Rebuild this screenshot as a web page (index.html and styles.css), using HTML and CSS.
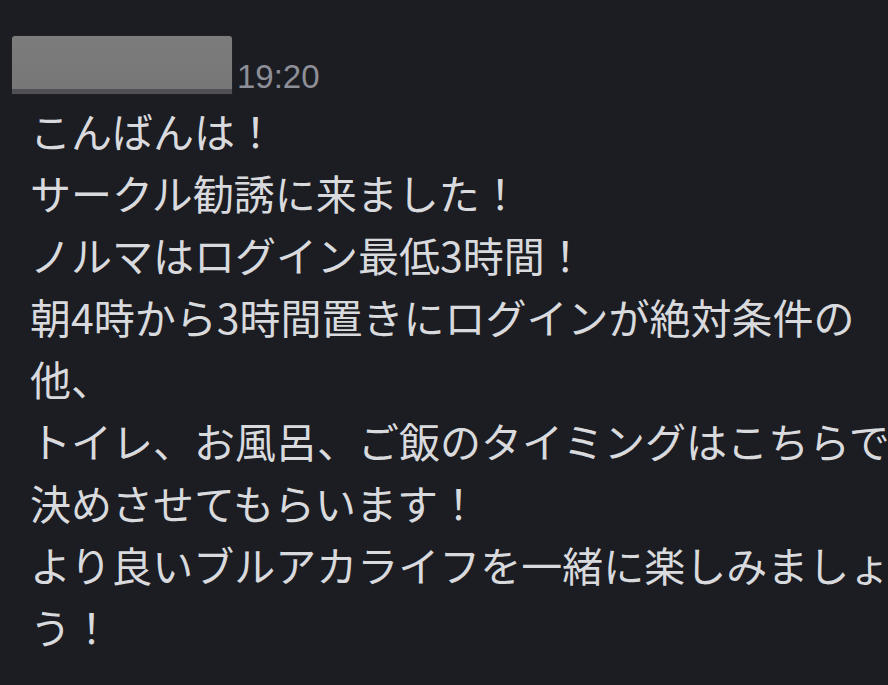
FILE: index.html
```html
<!DOCTYPE html>
<html lang="ja">
<head>
<meta charset="utf-8">
<link rel="stylesheet" href="styles.css">
</head>
<body>
<div class="message">
  <div class="header">
    <div class="name-blur"></div>
    <span class="time">19:20</span>
  </div>
  <p class="content">こんばんは！<br>サークル勧誘に来ました！<br>ノルマはログイン最低3時間！<br>朝4時から3時間置きにログインが絶対条件の<br>他、<br>トイレ、お風呂、ご飯のタイミングはこちらで<br>決めさせてもらいます！<br>より良いブルアカライフを一緒に楽しみましょ<br>う！</p>
</div>
</body>
</html>
```
FILE: styles.css
```css
html, body {
  margin: 0;
  padding: 0;
  background: #1c1d22;
  overflow: hidden;
}
body {
  width: 888px;
  height: 685px;
}
.message {
  padding: 36px 0 0 12px;
}
.header {
  display: flex;
  align-items: flex-end;
  height: 58px;
}
.name-blur {
  width: 220px;
  height: 53px;
  background: linear-gradient(180deg, #7c7c7c 0%, #777777 100%);
  border-radius: 3px 3px 0 0;
  border-bottom: 5px solid #4f4f55;
  box-shadow: 0 0 1px rgba(120,120,140,0.5);
}
.time {
  font-family: "Liberation Sans", Arial, sans-serif;
  font-size: 33px;
  line-height: 1;
  color: #8d8f98;
  margin-left: 5px;
  margin-bottom: 1px;
}
.content {
  margin: 5px 0 0 18px;
  font-family: "Noto Sans CJK JP", "Noto Sans", sans-serif;
  font-size: 41px;
  line-height: 62px;
  color: #d9dadd;
  white-space: nowrap;
}
```
